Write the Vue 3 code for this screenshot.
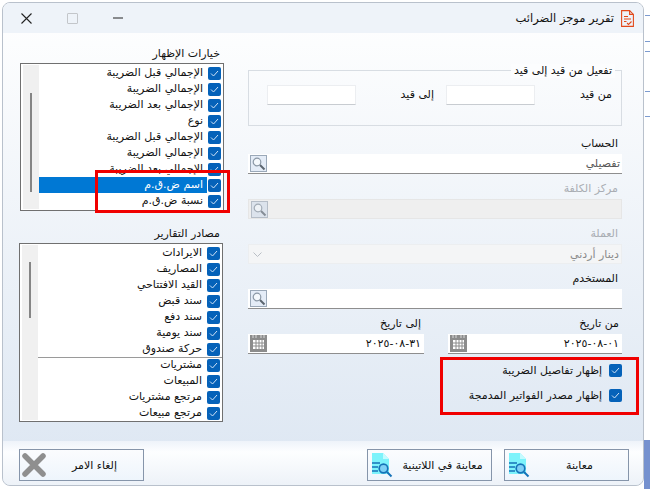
<script setup>
const displayOptions = [
  { label: 'الإجمالي قبل الضريبة' },
  { label: 'الإجمالي الضريبة' },
  { label: 'الإجمالي بعد الضريبة' },
  { label: 'نوع' },
  { label: 'الإجمالي قبل الضريبة' },
  { label: 'الإجمالي الضريبة' },
  { label: 'الإجمالي بعد الضريبة' },
  { label: 'اسم ض.ق.م', selected: true },
  { label: 'نسبة ض.ق.م' }
]
const sources = [
  'الايرادات', 'المصاريف', 'القيد الافتتاحي', 'سند قبض', 'سند دفع', 'سند يومية',
  'حركة صندوق', 'مشتريات', 'المبيعات', 'مرتجع مشتريات', 'مرتجع مبيعات'
]
const dashes = [15, 41, 51, 91, 116]
</script>

<template>
  <div class="page">
    <i v-for="d in dashes" :key="d" class="dash" :style="{ top: d + 'px' }"></i>
    <div class="corner"></div>
    <div class="window">
      <header class="titlebar">
        <svg class="report" width="13" height="17" viewBox="0 0 13 17" fill="none" stroke="#e2491b" stroke-width="1.1">
          <path d="M.6.6h8l3.8 3.8v12H.6z" />
          <path d="M8.6.6v3.8h3.8M3 6.5h4M3 9h7M3 11.5h2.500" />
          <path d="M6 13l1.500 1.500L10.500 11.500" />
        </svg>
        <span class="title">تقرير موجز الضرائب</span>
        <div class="controls">
          <svg width="10" height="2" viewBox="0 0 10 2"><path d="M0 1h10" stroke="#222" /></svg>
          <span class="maximize"></span>
          <svg width="11" height="11" viewBox="0 0 11 11"><path d="M.5.500l10 10M10.500.500l-10 10" stroke="#222" stroke-width="1.100" /></svg>
        </div>
      </header>

      <main class="body">
        <section class="form">
          <div class="group">
            <span class="legend">تفعيل من قيد إلى قيد</span>
            <label class="group-label">من قيد</label>
            <div class="box"></div>
            <label class="group-label second">إلى قيد</label>
            <div class="box"></div>
          </div>

          <div class="field first">
            <label>الحساب</label>
            <div class="input">
              <span class="value muted">تفصيلي</span>
              <svg class="lookup" width="17" height="17" viewBox="0 0 17 17">
                <rect x=".5" y=".5" width="16" height="16" fill="#e4ecf7" stroke="#9aa8b8" />
                <circle cx="7" cy="7" r="3.800" fill="#f4f8fc" stroke="#8a97a5" stroke-width="1.200" />
                <path d="M10 10l4.500 4.500" stroke="#5c6670" stroke-width="2" />
              </svg>
            </div>
          </div>
          <div class="field disabled">
            <label>مركز الكلفة</label>
            <div class="input off">
              <svg class="lookup" width="17" height="17" viewBox="0 0 17 17">
                <rect x=".5" y=".5" width="16" height="16" fill="#dce3ec" stroke="#b5bdc7" />
                <circle cx="7" cy="7" r="3.800" fill="#eef2f6" stroke="#a2abb5" stroke-width="1.200" />
                <path d="M10 10l4.500 4.500" stroke="#858d96" stroke-width="2" />
              </svg>
            </div>
          </div>
          <div class="field disabled">
            <label>العملة</label>
            <div class="input soft">
              <span class="value faint">دينار أردني</span>
              <svg class="chevron" width="9" height="5" viewBox="0 0 9 5" fill="none"><path d="M.5.500l4 4 4-4" stroke="#b9bec5" /></svg>
            </div>
          </div>
          <div class="field">
            <label>المستخدم</label>
            <div class="input">
              <svg class="lookup" width="17" height="17" viewBox="0 0 17 17">
                <rect x=".5" y=".5" width="16" height="16" fill="#e4ecf7" stroke="#9aa8b8" />
                <circle cx="7" cy="7" r="3.800" fill="#f4f8fc" stroke="#8a97a5" stroke-width="1.200" />
                <path d="M10 10l4.500 4.500" stroke="#5c6670" stroke-width="2" />
              </svg>
            </div>
          </div>

          <div class="dates">
            <div class="field date-from">
              <label>من تاريخ</label>
              <div class="input">
                <span class="value date-value">٢٠٢٥-٠٨-٠١</span>
                <svg class="lookup" width="17" height="17" viewBox="0 0 17 17">
                  <rect width="17" height="17" fill="#8c8c8c" />
                  <path d="M3 0v3M6 0v3M11 0v3M14 0v3" stroke="#d8d8d8" />
                  <path d="M3 5h11v9H3z" fill="#fff" />
                  <path d="M3 8h11M3 11h11M6 5v9M9 5v9M12 5v9" stroke="#8c8c8c" />
                </svg>
              </div>
            </div>
            <div class="field date-to">
              <label>إلى تاريخ</label>
              <div class="input">
                <span class="value date-value">٢٠٢٥-٠٨-٣١</span>
                <svg class="lookup" width="17" height="17" viewBox="0 0 17 17">
                  <rect width="17" height="17" fill="#8c8c8c" />
                  <path d="M3 0v3M6 0v3M11 0v3M14 0v3" stroke="#d8d8d8" />
                  <path d="M3 5h11v9H3z" fill="#fff" />
                  <path d="M3 8h11M3 11h11M6 5v9M9 5v9M12 5v9" stroke="#8c8c8c" />
                </svg>
              </div>
            </div>
          </div>

          <div class="flags">
            <div class="highlight-flags"></div>
            <div class="flag">
              <span class="check">
                <svg width="9" height="7" viewBox="0 0 9 7" fill="none"><path d="M1 3.500l2.500 2.500L8 1" stroke="#cfe2f6" /></svg>
              </span>
              <span>إظهار تفاصيل الضريبة</span>
            </div>
            <div class="flag">
              <span class="check">
                <svg width="9" height="7" viewBox="0 0 9 7" fill="none"><path d="M1 3.500l2.500 2.500L8 1" stroke="#cfe2f6" /></svg>
              </span>
              <span>إظهار مصدر الفواتير المدمجة</span>
            </div>
          </div>
        </section>

        <aside class="lists">
          <div class="list-title">خيارات الإظهار</div>
          <div class="list">
            <div class="highlight-rows"></div>
            <div class="rows">
              <div v-for="(o, i) in displayOptions" :key="i" class="row">
                <span class="check">
                  <svg width="9" height="7" viewBox="0 0 9 7" fill="none"><path d="M1 3.500l2.500 2.500L8 1" stroke="#cfe2f6" /></svg>
                </span>
                <span class="row-text" :class="{ selected: o.selected }">{{ o.label }}</span>
              </div>
            </div>
            <div class="scroll"><span class="thumb one"></span></div>
          </div>

          <div class="list-title second-title">مصادر التقارير</div>
          <div class="list sources">
            <div class="rows">
              <div v-for="(s, i) in sources" :key="i" class="row" :class="{ ruled: i === 6 }">
                <span class="check">
                  <svg width="9" height="7" viewBox="0 0 9 7" fill="none"><path d="M1 3.500l2.500 2.500L8 1" stroke="#cfe2f6" /></svg>
                </span>
                <span class="row-text">{{ s }}</span>
              </div>
            </div>
            <div class="scroll"><span class="thumb two"></span></div>
          </div>
        </aside>
      </main>

      <footer class="footer">
        <button class="btn">
          <span class="btn-label">معاينة</span>
          <svg class="btn-icon" width="22" height="26" viewBox="0 0 22 26">
            <path d="M1 0h11l6 6v15H1z" fill="#7df3fb" />
            <path d="M12 0l6 6h-6z" fill="#c4fbff" />
            <path d="M1 10h8M1 14h6M1 18h6" stroke="#1673b8" stroke-width="1.600" />
            <circle cx="12.500" cy="15.500" r="4.300" fill="#7fd0f5" stroke="#1673b8" stroke-width="1.700" />
            <path d="M16 19l4.500 4.500" stroke="#1673b8" stroke-width="2" />
          </svg>
        </button>
        <button class="btn">
          <span class="btn-label">معاينة في اللاتينية</span>
          <svg class="btn-icon" width="22" height="26" viewBox="0 0 22 26">
            <path d="M1 0h11l6 6v15H1z" fill="#7df3fb" />
            <path d="M12 0l6 6h-6z" fill="#c4fbff" />
            <path d="M1 10h8M1 14h6M1 18h6" stroke="#1673b8" stroke-width="1.600" />
            <circle cx="12.500" cy="15.500" r="4.300" fill="#7fd0f5" stroke="#1673b8" stroke-width="1.700" />
            <path d="M16 19l4.500 4.500" stroke="#1673b8" stroke-width="2" />
          </svg>
        </button>
        <button class="btn cancel">
          <span class="btn-label">إلغاء الامر</span>
          <svg class="btn-icon x" width="24" height="24" viewBox="0 0 24 24">
            <path d="M3 3l18 18M21 3L3 21" stroke="#8f8f8f" stroke-width="5.500" stroke-linecap="round" />
          </svg>
        </button>
      </footer>
    </div>
  </div>
</template>

<style>
html, body { margin: 0; background: #fff; }
</style>

<style scoped>
.page {
  position: relative;
  width: 650px;
  height: 489px;
  overflow: hidden;
  padding: 2px 0 0 2px;
  box-sizing: border-box;
  background: #fff;
  font-family: "DejaVu Sans", "Noto Sans", sans-serif;
  font-size: 11px;
  color: #111;
}
.dash { position: absolute; left: 645px; width: 5px; height: 1px; background: #7c9bd0; }
.corner { position: absolute; left: 644px; top: 440px; width: 6px; height: 49px; background: #7591cf; }
.window {
  position: relative;
  width: 642px;
  height: 484px;
  box-sizing: border-box;
  border: 1px solid #b9c1cc;
  border-radius: 8px;
  overflow: hidden;
  display: flex;
  flex-direction: column;
  direction: rtl;
  background: linear-gradient(#fff, #dce6f2);
}
.titlebar {
  height: 30px;
  flex: none;
  display: flex;
  align-items: center;
  background: #eef3f9;
  padding-right: 9px;
}
.title { margin-right: 7px; font-size: 11.5px; }
.controls {
  margin-right: auto;
  display: flex;
  align-items: center;
  gap: 35px;
  padding-left: 18px;
}
.maximize { width: 9px; height: 9px; border: 1px solid #c3c6ca; border-radius: 1px; }

.body {
  flex: none;
  height: 408px;
  display: flex;
  padding-right: 21px;
  gap: 24px;
}
.form { width: 374px; flex: none; padding-top: 37px; }
.group {
  position: relative;
  height: 56px;
  box-sizing: border-box;
  border: 1px solid #d8dde3;
  display: flex;
  align-items: center;
  padding: 0 9px 7px 0;
}
.legend {
  position: absolute;
  top: -7px;
  right: 6px;
  padding: 0 3px;
  background: #fcfdfe;
  line-height: 14px;
}
.group-label { width: 77px; }
.group-label.second { margin-right: 0; padding-right: 12px; box-sizing: border-box; width: 90px; }
.box {
  width: 89px;
  height: 20px;
  box-sizing: border-box;
  background: #fff;
  border: 1px solid #eceef1;
  border-bottom-color: #c8ccd1;
}

.field label { display: block; height: 14px; line-height: 14px; padding: 0 4px; margin-bottom: 3px; }
.field { margin-top: 8px; }
.field.first { margin-top: 11px; }
.field.disabled label { color: #a9adb3; }
.input {
  position: relative;
  height: 19px;
  box-sizing: content-box;
  border-bottom: 1px solid #8e8e8e;
  background: #fff;
  display: flex;
  align-items: center;
}
.input.off { background: #efefef; border: 1px solid #e6e6e6; height: 18px; }
.input.soft { background: #f4f5f6; border: 1px solid #eceef0; height: 18px; }
.value { padding-right: 2px; }
.value.muted { color: #555; }
.value.faint { color: #8a8a8a; }
.date-value { direction: ltr; unicode-bidi: bidi-override; }
.lookup { position: absolute; left: 2px; top: 1px; }
.chevron { position: absolute; left: 4px; top: 7px; }

.dates { display: flex; gap: 24px; }
.date-from { width: 174px; }
.date-to { width: 176px; }
.date-from label, .date-to label { padding: 0 3px; }
.date-from .value, .date-to .value { padding-right: 0; margin-right: 3px; }

.flags { position: relative; padding-top: 4px; }
.flag {
  height: 25px;
  display: flex;
  align-items: center;
  gap: 7px;
}
.highlight-flags {
  position: absolute;
  top: 3px;
  right: -17px;
  width: 199px;
  height: 58px;
  box-sizing: border-box;
  border: 3px solid #f00000;
}

.lists { width: 204px; flex: none; padding-top: 14px; }
.list-title { height: 14px; line-height: 14px; padding-right: 4px; margin-bottom: 2px; }
.second-title { margin-top: 16px; }
.list {
  position: relative;
  height: 148px;
  box-sizing: border-box;
  border: 1px solid #707070;
  background: #fff;
  display: flex;
}
.list.sources { height: 179px; margin-left: -1px; margin-right: 1px; }
.rows { flex: 1; padding-top: 1px; }
.row {
  position: relative;
  height: 16px;
  display: flex;
  align-items: center;
  padding-right: 2px;
  gap: 1px;
}
.row.ruled { border-bottom: 1px solid #9a9a9a; box-sizing: content-box; margin-bottom: -1px; }
.row-text { flex: 1; padding: 0 4px 0 0; line-height: 16px; height: 16px; overflow: hidden; white-space: nowrap; }
.row-text.selected { background: #0078d4; color: #fff; }
.check {
  width: 13px;
  height: 13px;
  flex: none;
  border-radius: 2px;
  background: #0562b9;
  display: flex;
  align-items: center;
  justify-content: center;
}
.scroll {
  width: 16px;
  flex: none;
  margin: 1px 0 1px 2px;
  background: #f0f0f0;
  position: relative;
  display: flex;
  justify-content: center;
}
.thumb { width: 2px; background: #858585; }
.thumb.one { height: 99px; margin-top: 28px; }
.thumb.two { height: 56px; margin-top: 17px; }
.highlight-rows {
  position: absolute;
  left: 74px;
  top: 106px;
  width: 135px;
  height: 43px;
  box-sizing: border-box;
  border: 3px solid #f00000;
  z-index: 2;
}

.footer {
  flex: 1;
  display: flex;
  align-items: flex-start;
  padding: 8px 14px 0 0;
  gap: 12px;
  background: linear-gradient(#eef3fa 0%, #fdfeff 25%, #edf2f8 100%);
}
.btn {
  position: relative;
  width: 125px;
  height: 32px;
  box-sizing: border-box;
  border: 1px solid #8695aa;
  background: linear-gradient(#fbfcfe, #eef5fc);
  font: inherit;
  color: inherit;
  padding: 0;
  display: flex;
  align-items: center;
  justify-content: flex-start;
}
.btn.cancel { margin-right: auto; margin-left: 16px; }
.btn-label { position: absolute; left: 32px; right: 6px; text-align: center; }
.btn-icon { position: absolute; left: 3px; top: 3px; }
.btn-icon.x { top: 3px; left: 2px; }
</style>
